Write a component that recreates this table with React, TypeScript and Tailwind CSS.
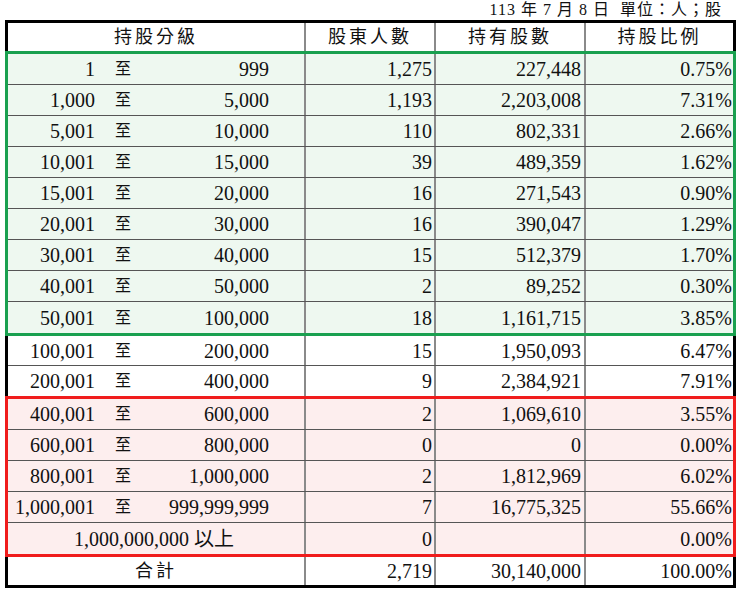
import React from "react";

type Row = { a?: string; b?: string; single?: string; n: string; s: string; p: string };

const green: Row[] = [
  { a: "1", b: "999", n: "1,275", s: "227,448", p: "0.75%" },
  { a: "1,000", b: "5,000", n: "1,193", s: "2,203,008", p: "7.31%" },
  { a: "5,001", b: "10,000", n: "110", s: "802,331", p: "2.66%" },
  { a: "10,001", b: "15,000", n: "39", s: "489,359", p: "1.62%" },
  { a: "15,001", b: "20,000", n: "16", s: "271,543", p: "0.90%" },
  { a: "20,001", b: "30,000", n: "16", s: "390,047", p: "1.29%" },
  { a: "30,001", b: "40,000", n: "15", s: "512,379", p: "1.70%" },
  { a: "40,001", b: "50,000", n: "2", s: "89,252", p: "0.30%" },
  { a: "50,001", b: "100,000", n: "18", s: "1,161,715", p: "3.85%" },
];
const white: Row[] = [
  { a: "100,001", b: "200,000", n: "15", s: "1,950,093", p: "6.47%" },
  { a: "200,001", b: "400,000", n: "9", s: "2,384,921", p: "7.91%" },
];
const red: Row[] = [
  { a: "400,001", b: "600,000", n: "2", s: "1,069,610", p: "3.55%" },
  { a: "600,001", b: "800,000", n: "0", s: "0", p: "0.00%" },
  { a: "800,001", b: "1,000,000", n: "2", s: "1,812,969", p: "6.02%" },
  { a: "1,000,001", b: "999,999,999", n: "7", s: "16,775,325", p: "55.66%" },
  { single: "1,000,000,000 以上", n: "0", s: "", p: "0.00%" },
];

const font = { fontFamily: '"Liberation Serif", "Noto Sans CJK TC", serif' };

function DataRow({ r, h, last }: { r: Row; h: string; last: boolean }) {
  return (
    <div className={`flex ${h} ${last ? "" : "border-b border-[#555]"}`}>
      <div className="w-[296px] flex items-center">
        {r.single ? (
          <div className="w-full text-center pr-[4px]">{r.single}</div>
        ) : (
          <>
            <div className="w-[87px] text-right">{r.a}</div>
            <div className="ml-[20px] w-[17px] text-[16px] leading-none">至</div>
            <div className="w-[137px] text-right">{r.b}</div>
          </>
        )}
      </div>
      <div className="w-[130px] border-l-2 border-[#8a8a8a] flex items-center justify-end pr-[2px]">{r.n}</div>
      <div className="w-[150px] border-l-2 border-[#8a8a8a] flex items-center justify-end pr-[3px]">{r.s}</div>
      <div className="flex-1 border-l-2 border-[#8a8a8a] flex items-center justify-end pr-[1px]">{r.p}</div>
    </div>
  );
}

export default function App() {
  return (
    <div className="w-[740px] h-[592px] bg-white text-[#111] text-[20px] leading-none" style={font}>
      <div className="h-[20px] flex items-end justify-end pr-[18px] pb-[2px] text-[16px] tracking-[1px] whitespace-pre">
        113 年 7 月 8 日  單位：人；股
      </div>
      <div className="ml-[5px] w-[731px] border-[3px] border-black">
        <div className="flex h-[28px] text-[18px] tracking-[3px]">
          <div className="w-[296px] flex items-center justify-center">持股分級</div>
          <div className="w-[130px] border-l-2 border-[#8a8a8a] flex items-center justify-center">股東人數</div>
          <div className="w-[150px] border-l-2 border-[#8a8a8a] flex items-center justify-center">持有股數</div>
          <div className="flex-1 border-l-2 border-[#8a8a8a] flex items-center justify-center">持股比例</div>
        </div>
        <div className="-mx-[3px] border-[3px] border-[#19a04f] bg-[#eef8f0]">
          {green.map((r, i) => (
            <DataRow key={i} r={r} h="h-[31px]" last={i === green.length - 1} />
          ))}
        </div>
        {white.map((r, i) => (
          <DataRow key={i} r={r} h="h-[30px]" last={i === white.length - 1} />
        ))}
        <div className="-mx-[3px] border-[3px] border-[#f01c1c] bg-[#fdeeee]">
          {red.map((r, i) => (
            <DataRow key={i} r={r} h="h-[31px]" last={i === red.length - 1} />
          ))}
        </div>
        <div className="flex h-[28px]">
          <div className="w-[296px] flex items-center justify-center text-[18px] tracking-[3px]">合計</div>
          <div className="w-[130px] border-l-2 border-[#8a8a8a] flex items-center justify-end pr-[2px]">2,719</div>
          <div className="w-[150px] border-l-2 border-[#8a8a8a] flex items-center justify-end pr-[3px]">30,140,000</div>
          <div className="flex-1 border-l-2 border-[#8a8a8a] flex items-center justify-end pr-[1px]">100.00%</div>
        </div>
      </div>
    </div>
  );
}
